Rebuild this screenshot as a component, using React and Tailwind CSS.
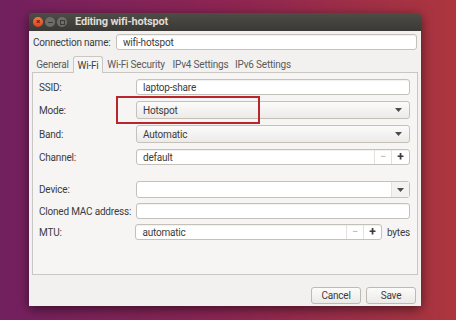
import React from "react";

function Arrow() {
    return (
        <svg width="7" height="4" viewBox="0 0 7 4" className="mr-[7px]">
            <path d="M0 0 L7 0 L3.5 4 Z" fill="#4c4c4c" />
        </svg>
    );
}

function Entry({ value, className = "" }) {
    return (
        <div className={`flex-1 h-full flex items-center bg-white border border-[#c4c1bb] rounded-[3px] pl-[6px] shadow-[inset_0_1px_1px_rgba(0,0,0,0.06)] ${className}`}>
            {value}
        </div>
    );
}

function Combo({ value }) {
    return (
        <div className="flex-1 h-full flex items-center justify-between border border-[#c4c1bb] rounded-[3px] pl-[6px] bg-gradient-to-b from-[#fbfbfa] to-[#ecebe8]">
            <span>{value}</span>
            <Arrow />
        </div>
    );
}

function Spin({ value, className = "" }) {
    return (
        <div className={`h-full flex items-center bg-white border border-[#c4c1bb] rounded-[3px] shadow-[inset_0_1px_1px_rgba(0,0,0,0.06)] ${className}`}>
            <span className="flex-1 pl-[6px]">{value}</span>
            <span className="w-[17px] h-full flex items-center justify-center border-l border-[#e3e1dd] text-[#b0aeaa] text-[11px]">−</span>
            <span className="w-[18px] h-full flex items-center justify-center border-l border-[#e3e1dd] text-[#3a3a3a] text-[12px] font-bold">+</span>
        </div>
    );
}

function Row({ label, className = "", children }) {
    return (
        <div className={`flex items-center ${className}`}>
            <div className="w-[97px]">{label}</div>
            {children}
        </div>
    );
}

export default function App() {
    const tabs = [
        { name: "General", w: "w-[41px]" },
        { name: "Wi-Fi", w: "w-[30px]", active: true },
        { name: "Wi-Fi Security", w: "w-[66px]" },
        { name: "IPv4 Settings", w: "w-[63px]" },
        { name: "IPv6 Settings", w: "w-[62px]" },
    ];

    return (
        <div className="w-[456px] h-[320px] overflow-hidden bg-gradient-to-r from-[#73205f] via-[#8d2552] to-[#ad363d] pt-[13px] pl-[29px] font-['Roboto',sans-serif] text-[10px] text-[#3c3c3c] tracking-[-0.2px]">
            <div className="w-[392px] h-[293px] flex flex-col rounded-t-[4px] overflow-hidden shadow-[0_3px_12px_rgba(0,0,0,0.55)]">
                {/* Title bar */}
                <div className="h-[18px] flex items-center bg-gradient-to-b from-[#4d4c47] to-[#3a3935] pl-[4px]">
                    <div className="w-[10px] h-[10px] rounded-full bg-gradient-to-b from-[#f7774a] to-[#d8441f] flex items-center justify-center text-[8px] leading-none text-[#5a2010] font-bold">×</div>
                    <div className="w-[10px] h-[10px] rounded-full bg-[#6f6d68] ml-[2px] flex items-center justify-center">
                        <div className="w-[5px] h-[1px] bg-[#3c3b37]" />
                    </div>
                    <div className="w-[10px] h-[10px] rounded-full bg-[#6f6d68] ml-[2px] flex items-center justify-center">
                        <div className="w-[5px] h-[5px] border border-[#3c3b37]" />
                    </div>
                    <span className="ml-[8px] font-bold text-[11px] text-[#dfdbd2]">Editing wifi-hotspot</span>
                </div>

                {/* Body */}
                <div className="flex-1 bg-[#f2f1f0] flex flex-col px-[3px] pt-[3px]">
                    <div className="flex items-center h-[16px]">
                        <div className="w-[84px] pl-[1px]">Connection name:</div>
                        <Entry value="wifi-hotspot" className="mr-[1px]" />
                    </div>

                    {/* Tabs */}
                    <div className="flex items-end h-[17px] mt-[5px]">
                        {tabs.map((t) => (
                            <div
                                key={t.name}
                                className={`${t.w} flex items-center justify-center ${t.active ? "h-[17px] bg-[#f6f5f4] border border-b-0 border-[#c9c7c2] rounded-t-[3px] text-[#3c3c3c] -mb-[1px] relative z-10" : "h-[16px] text-[#5a5a5a]"}`}
                            >
                                {t.name}
                            </div>
                        ))}
                    </div>

                    {/* Notebook */}
                    <div className="h-[203px] border border-[#c9c7c2] bg-[#f6f5f4] pt-[6px] pl-[6px] pr-[7px]">
                        <Row label="SSID:" className="h-[16px]">
                            <Entry value="laptop-share" />
                        </Row>
                        <Row label="Mode:" className="h-[18px] mt-[6px] relative">
                            <Combo value="Hotspot" />
                            <div className="absolute left-[77px] top-[-5px] w-[144px] h-[28px] border-2 border-[#b8262b]" />
                        </Row>
                        <Row label="Band:" className="h-[18px] mt-[6px]">
                            <Combo value="Automatic" />
                        </Row>
                        <Row label="Channel:" className="h-[16px] mt-[6px]">
                            <Spin value="default" className="flex-1" />
                        </Row>
                        <Row label="Device:" className="h-[17px] mt-[16px]">
                            <div className="flex-1 h-full flex items-center justify-end border border-[#c4c1bb] rounded-[3px] bg-white">
                                <div className="h-full w-[18px] flex items-center justify-center border-l border-[#e3e1dd] bg-[#f3f2f0]">
                                    <svg width="7" height="4" viewBox="0 0 7 4">
                                        <path d="M0 0 L7 0 L3.5 4 Z" fill="#4c4c4c" />
                                    </svg>
                                </div>
                            </div>
                        </Row>
                        <Row label="Cloned MAC address:" className="h-[16px] mt-[5px]">
                            <Entry value="" />
                        </Row>
                        <Row label="MTU:" className="h-[16px] mt-[5px]">
                            <Spin value="automatic" className="w-[248px]" />
                            <span className="ml-[5px]">bytes</span>
                        </Row>
                    </div>

                    {/* Buttons */}
                    <div className="flex justify-end gap-[5px] mt-[12px] mr-[2px]">
                        <div className="w-[50px] h-[17px] flex items-center justify-center border border-[#bdbab4] rounded-[3px] bg-gradient-to-b from-[#fbfbfa] to-[#ebeae7]">Cancel</div>
                        <div className="w-[50px] h-[17px] flex items-center justify-center border border-[#bdbab4] rounded-[3px] bg-gradient-to-b from-[#fbfbfa] to-[#ebeae7]">Save</div>
                    </div>
                </div>
            </div>
        </div>
    );
}
